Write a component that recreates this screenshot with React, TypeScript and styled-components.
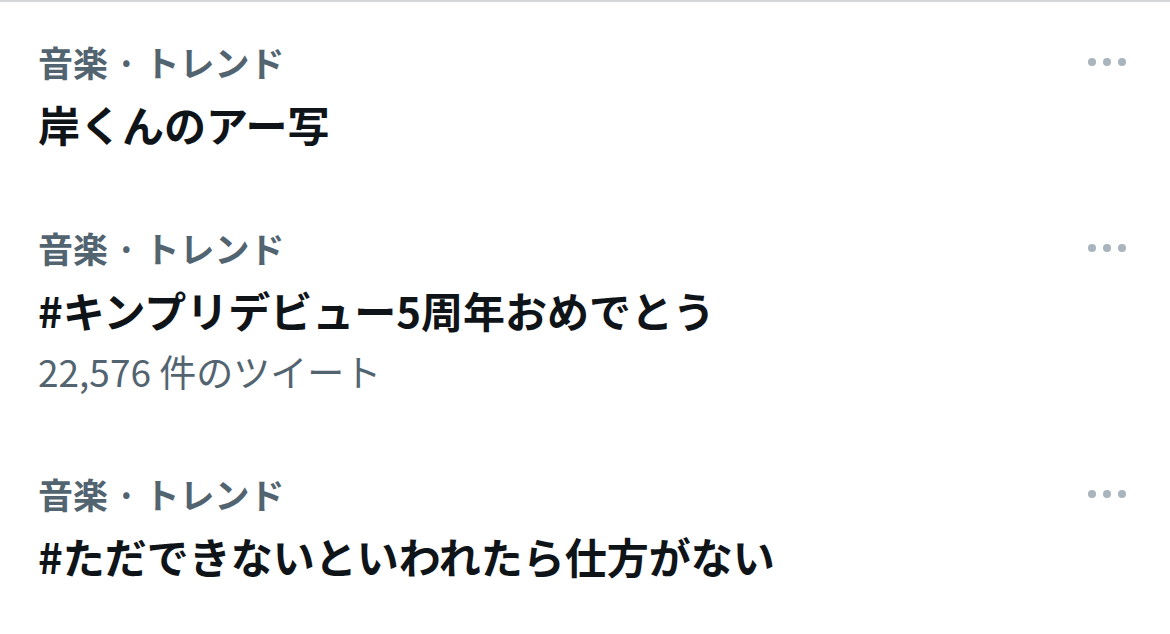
import styled, { createGlobalStyle } from "styled-components";

const GlobalStyle = createGlobalStyle`
    html, body {
        margin: 0;
        padding: 0;
        background: #ffffff;
    }
    body {
        font-family: "Noto Sans CJK JP", "Noto Sans", "Liberation Sans", sans-serif;
    }
`;

const List = styled.div`
    width: 1170px;
    border-top: 2px solid #d3d7d9;
`;

const Trend = styled.div`
    display: flex;
    align-items: flex-start;
    padding: 29px 44px 33px 38px;
`;

const Content = styled.div`
    flex: 1;
    display: flex;
    flex-direction: column;
`;

const Category = styled.div`
    font-size: 35px;
    font-weight: 700;
    line-height: 62px;
    color: #536471;
    white-space: nowrap;
`;

const Title = styled.div`
    font-size: 42px;
    font-weight: 700;
    line-height: 62px;
    color: #0f1419;
    white-space: nowrap;
`;

const Count = styled.div`
    font-size: 37px;
    font-weight: 400;
    line-height: 60px;
    color: #536471;
    white-space: nowrap;
`;

const More = styled.div`
    height: 62px;
    display: flex;
    align-items: center;
    gap: 7px;
`;

const Dot = styled.span`
    width: 8px;
    height: 8px;
    border-radius: 50%;
    background: #a9b4bd;
`;

type TrendItem = {
    id: number;
    category: string;
    title: string;
    count?: string;
};

const trends: TrendItem[] = [
    { id: 1, category: "音楽 · トレンド", title: "岸くんのアー写" },
    {
        id: 2,
        category: "音楽 · トレンド",
        title: "#キンプリデビュー5周年おめでとう",
        count: "22,576 件のツイート",
    },
    { id: 3, category: "音楽 · トレンド", title: "#ただできないといわれたら仕方がない" },
];

function App() {
    return (
        <>
            <GlobalStyle />
            <List>
                {trends.map((t) => (
                    <Trend key={t.id}>
                        <Content>
                            <Category>{t.category}</Category>
                            <Title>{t.title}</Title>
                            {t.count && <Count>{t.count}</Count>}
                        </Content>
                        <More>
                            <Dot />
                            <Dot />
                            <Dot />
                        </More>
                    </Trend>
                ))}
            </List>
        </>
    );
}

export default App;
